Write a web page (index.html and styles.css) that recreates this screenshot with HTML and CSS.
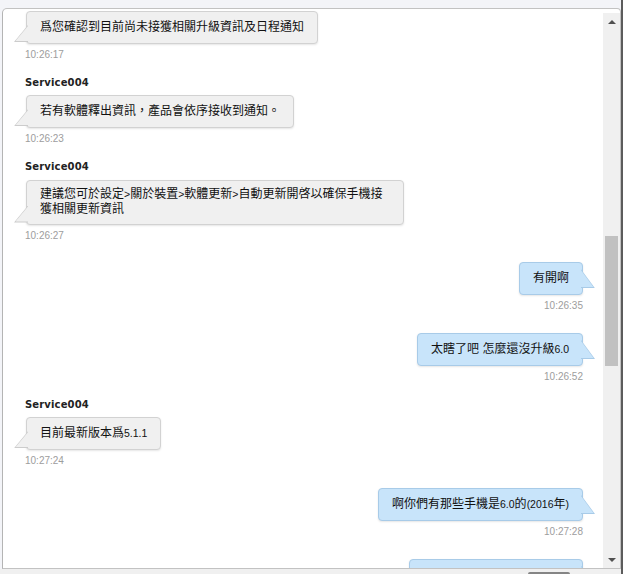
FILE: index.html
```html
<!DOCTYPE html>
<html>
<head>
<meta charset="utf-8">
<link rel="stylesheet" href="styles.css">
</head>
<body>
<div class="window">
  <div class="topstrip"></div>
  <div class="panel">
    <div class="viewport">
      <div class="msgs">
        <div class="msg them">
          <div class="bubble">爲您確認到目前尚未接獲相關升級資訊及日程通知</div>
          <div class="time">10:26:17</div>
        </div>
        <div class="msg them">
          <div class="name">Service004</div>
          <div class="bubble">若有軟體釋出資訊，產品會依序接收到通知。</div>
          <div class="time">10:26:23</div>
        </div>
        <div class="msg them">
          <div class="name">Service004</div>
          <div class="bubble multi">建議您可於設定<span class="lat">&gt;</span>關於裝置<span class="lat">&gt;</span>軟體更新<span class="lat">&gt;</span>自動更新開啓以確保手機接<br>獲相關更新資訊</div>
          <div class="time">10:26:27</div>
        </div>
        <div class="msg me">
          <div class="bubble">有開啊</div>
          <div class="time">10:26:35</div>
        </div>
        <div class="msg me">
          <div class="bubble">太瞎了吧 怎麼還沒升級<span class="lat">6.0</span></div>
          <div class="time">10:26:52</div>
        </div>
        <div class="msg them">
          <div class="name">Service004</div>
          <div class="bubble">目前最新版本爲<span class="lat">5.1.1</span></div>
          <div class="time">10:27:24</div>
        </div>
        <div class="msg me">
          <div class="bubble">啊你們有那些手機是<span class="lat">6.0</span>的<span class="lat">(2016</span>年<span class="lat">)</span></div>
          <div class="time">10:27:28</div>
        </div>
        <div class="msg me">
          <div class="bubble clipped"></div>
        </div>
      </div>
    </div>
    <div class="scrollbar">
      <div class="sb-btn"><span class="arrow-up"></span></div>
      <div class="sb-track"><div class="sb-thumb"></div></div>
      <div class="sb-btn"><span class="arrow-down"></span></div>
    </div>
  </div>
  <div class="bottombar"><div class="btn-edge"></div></div>
</div>
<div class="edge"></div>
</body>
</html>
```
FILE: styles.css
```css
html, body {
  margin: 0;
  height: 100%;
}
body {
  display: flex;
  background: #f3f4f8;
  font-family: "Liberation Sans", "Noto Sans CJK TC", sans-serif;
  overflow: hidden;
}
.window {
  width: 621px;
  height: 574px;
  display: flex;
  flex-direction: column;
  flex: none;
}
.topstrip {
  height: 8px;
  flex: none;
}
.panel {
  flex: none;
  height: 561px;
  margin-left: 2px;
  box-sizing: border-box;
  border: 1px solid #c2c2c2;
  border-left-color: #b4b4b4;
  border-top-left-radius: 5px;
  border-top-right-radius: 4px;
  background: #fff;
  display: flex;
  padding-top: 2px;
}
.viewport {
  flex: 1;
  overflow: hidden;
}
.msgs {
  padding: 0 20px 0 22px;
}
.msg {
  display: flex;
  flex-direction: column;
  align-items: flex-start;
  margin-bottom: 20.75px;
}
.msg.me {
  align-items: flex-end;
}
.name {
  font-family: "DejaVu Sans", sans-serif;
  font-weight: bold;
  font-size: 10px;
  letter-spacing: 0.15px;
  line-height: 14px;
  color: #222;
  margin: -6px 0 5.5px 0;
}
.bubble {
  position: relative;
  box-sizing: border-box;
  max-width: 378px;
  padding: 8px 13px;
  line-height: 15px;
  font-size: 12px;
  color: #111;
  border: 1px solid #d2d2d2;
  background: #f0f0f0;
  border-radius: 4px;
  box-shadow: 0 1px 2px rgba(0, 0, 0, 0.1);
  margin-left: 1px;
}
.bubble.multi {
  width: 378px;
  padding: 6.5px 13px;
}
.bubble.clipped {
  width: 174px;
  height: 33px;
}
.me .bubble {
  background: #c8e4fa;
  border-color: #a8cbe8;
  margin-left: 0;
}
.bubble::before,
.bubble::after {
  content: "";
  position: absolute;
}
.them .bubble::before {
  left: -13px;
  bottom: 1px;
  width: 14px;
  height: 17px;
  background: #cccccc;
  clip-path: polygon(100% 0, 100% 100%, 0 100%);
}
.them .bubble::after {
  left: -11.5px;
  bottom: 2px;
  width: 12.5px;
  height: 15px;
  background: #f0f0f0;
  clip-path: polygon(100% 0, 100% 100%, 0 100%);
}
.me .bubble::before {
  right: -13px;
  bottom: 6px;
  width: 14px;
  height: 19px;
  background: #a8cbe8;
  clip-path: polygon(0 0, 100% 100%, 0 100%);
}
.me .bubble::after {
  right: -11.5px;
  bottom: 7px;
  width: 12.5px;
  height: 17px;
  background: #c8e4fa;
  clip-path: polygon(0 0, 100% 100%, 0 100%);
}
.lat {
  font-size: 10.5px;
  line-height: 1;
}
.time {
  font-size: 10px;
  line-height: 13px;
  margin-top: 4px;
  color: #9d9d9d;
}
.scrollbar {
  width: 17px;
  flex: none;
  display: flex;
  flex-direction: column;
  background: #f0f0f0;
  margin-top: 2px;
}
.sb-btn {
  height: 17px;
  flex: none;
  display: flex;
  align-items: center;
  justify-content: center;
}
.sb-track {
  flex: 1;
}
.sb-thumb {
  margin: 206px 2px 0 2px;
  height: 130px;
  background: #c1c1c1;
}
.arrow-up {
  width: 0;
  height: 0;
  border-left: 4px solid transparent;
  border-right: 4px solid transparent;
  border-bottom: 4px solid #505050;
}
.arrow-down {
  width: 0;
  height: 0;
  border-left: 4px solid transparent;
  border-right: 4px solid transparent;
  border-top: 4px solid #505050;
}
.bottombar {
  flex: 1;
  background: #f0f0f0;
}
.btn-edge {
  margin: 3px 0 0 528px;
  width: 42px;
  height: 2px;
  background: #858585;
  border-radius: 2px 2px 0 0;
}
.edge {
  width: 2px;
  flex: none;
  background: #5c5c5c;
}
```
